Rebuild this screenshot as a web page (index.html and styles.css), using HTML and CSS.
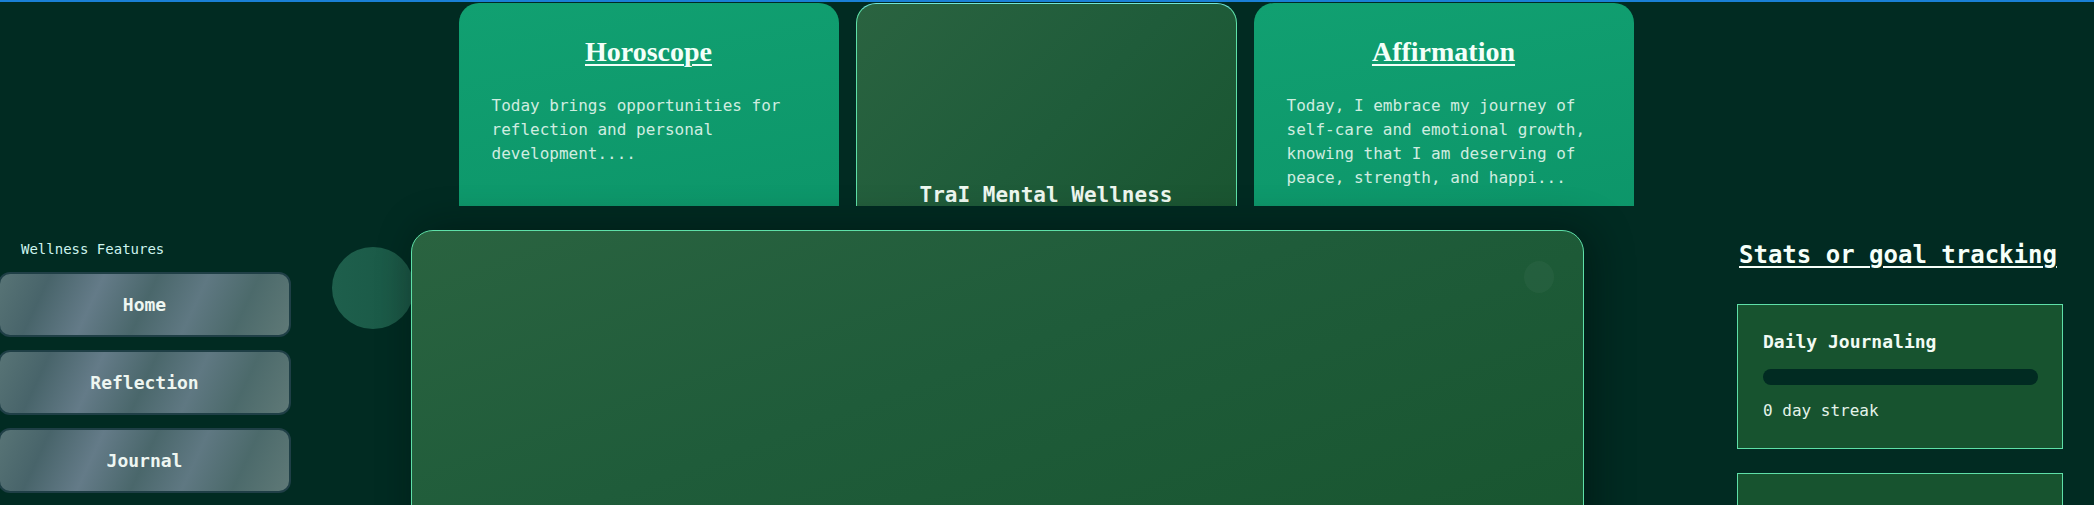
FILE: index.html
```html
<!DOCTYPE html>
<html lang="en">
<head>
<meta charset="utf-8">
<title>TraI Mental Wellness</title>
<link rel="stylesheet" href="styles.css">
</head>
<body>
<div class="topline"></div>
<header class="top">
  <section class="card card-green">
    <h2 class="card-title">Horoscope</h2>
    <p class="card-text">Today brings opportunities for reflection and personal development....</p>
  </section>
  <section class="card card-brand">
    <div class="brand">TraI Mental Wellness</div>
  </section>
  <section class="card card-green">
    <h2 class="card-title">Affirmation</h2>
    <p class="card-text">Today, I embrace my journey of self-care and emotional growth, knowing that I am deserving of peace, strength, and happi...</p>
  </section>
</header>
<main class="layout">
  <nav class="sidebar">
    <div class="side-title">Wellness Features</div>
    <button class="nav-btn">Home</button>
    <button class="nav-btn">Reflection</button>
    <button class="nav-btn">Journal</button>
  </nav>
  <div class="deco"><div class="blob"></div></div>
  <section class="panel">
    <div class="panel-dot"></div>
  </section>
  <aside class="stats">
    <h3 class="stats-title">Stats or goal tracking</h3>
    <div class="stat-card">
      <div class="stat-name">Daily Journaling</div>
      <div class="bar"><div class="bar-fill" style="width:0%"></div></div>
      <div class="stat-value">0 day streak</div>
    </div>
    <div class="stat-card"></div>
  </aside>
</main>
</body>
</html>
```
FILE: styles.css
```css
* { box-sizing: border-box; }
html, body { margin: 0; padding: 0; }
body {
  background: #012b22;
  font-family: "DejaVu Sans Mono", "Liberation Mono", monospace;
  color: #e6f5ee;
  overflow: hidden;
  height: 505px;
}
.topline { height: 2px; background: #1a80d6; }

.top {
  display: flex;
  justify-content: center;
  gap: 17px;
  height: 204px;
  overflow: hidden;
  padding: 1px 2px 0 0;
}
.card {
  width: 380px;
  flex: 0 0 380px;
  height: 260px;
  border-radius: 20px;
  padding: 0 33px;
}
.card-green {
  background: linear-gradient(170deg, #11a071 0%, #0c9468 100%);
}
.card-brand {
  width: 381px;
  flex-basis: 381px;
  background: linear-gradient(135deg, #2a6340 0%, #1f5c3a 50%, #19542f 100%);
  border: 1px solid #5ee0a8;
  border-top-color: #6fe6d8;
  padding-top: 181px;
  text-align: center;
}
.brand {
  font-weight: bold;
  font-size: 21px;
  line-height: 20px;
  color: #eef8f0;
}
.card-title {
  margin: 29px 0 0;
  font-family: "Liberation Serif", "Times New Roman", serif;
  font-weight: bold;
  font-size: 28px;
  line-height: 40px;
  text-align: center;
  text-decoration: underline;
  text-decoration-thickness: 2px;
  text-underline-offset: 3px;
  color: #f4fff9;
}
.card-text {
  margin: 22px 0 0;
  font-size: 16px;
  line-height: 24px;
  color: #d0ede0;
}

.layout {
  display: flex;
  align-items: flex-start;
  padding-top: 24px;
}
.sidebar {
  width: 291px;
  flex: 0 0 291px;
  display: flex;
  flex-direction: column;
  gap: 13px;
}
.side-title {
  font-size: 14px;
  line-height: 17px;
  margin: 11px 0 1px 21px;
  color: #cdf4ee;
}
.nav-btn {
  display: block;
  width: 293px;
  height: 65px;
  margin-left: -2px;
  border: 2px solid #1f3f46;
  border-radius: 12px;
  background: linear-gradient(115deg, #587476 0%, #48646a 16%, #647b88 33%, #4a676b 50%, #5f7882 66%, #4c6a6b 82%, #5f7977 100%);
  font-family: "DejaVu Sans Mono", "Liberation Mono", monospace;
  font-weight: bold;
  font-size: 18px;
  color: #eef6f1;
  cursor: pointer;
}
.deco {
  width: 120px;
  flex: 0 0 120px;
}
.blob {
  width: 82px;
  height: 82px;
  margin: 17px 0 0 41px;
  border-radius: 50%;
  background: linear-gradient(90deg, #1e5f4c 0%, #1b5b48 60%, #1a5443 100%);
}
.panel {
  position: relative;
  width: 1173px;
  flex: 0 0 1173px;
  height: 320px;
  border: 1px solid #5ee0a8;
  border-radius: 22px;
  background: linear-gradient(160deg, #2a6340 0%, #1f5c3a 45%, #18552f 100%);
  box-shadow: 8px 0 40px rgba(0, 10, 8, 0.45);
}
.panel-dot {
  position: absolute;
  top: 30px;
  right: 29px;
  width: 30px;
  height: 32px;
  border-radius: 50%;
  background: rgba(255, 255, 255, 0.035);
}
.stats {
  width: 326px;
  flex: 0 0 326px;
  margin-left: 153px;
}
.stats-title {
  margin: 10px 0 34px 2px;
  font-size: 24px;
  line-height: 30px;
  font-weight: bold;
  text-decoration: underline;
  text-decoration-thickness: 2px;
  text-underline-offset: 3px;
  color: #f6fff9;
  white-space: nowrap;
}
.stat-card {
  border: 1px solid #5ee0a8;
  background: #17532f;
  padding: 26px 24px 24px 25px;
  margin-bottom: 24px;
  min-height: 145px;
}
.stat-name {
  font-weight: bold;
  font-size: 18px;
  line-height: 22px;
  color: #f2fbf4;
}
.bar {
  margin-top: 16px;
  height: 16px;
  border-radius: 8px;
  background: #012b22;
  overflow: hidden;
}
.bar-fill { height: 100%; background: #5ee0a8; }
.stat-value {
  margin-top: 14px;
  font-size: 16px;
  line-height: 24px;
  color: #e4f4ea;
}
```
